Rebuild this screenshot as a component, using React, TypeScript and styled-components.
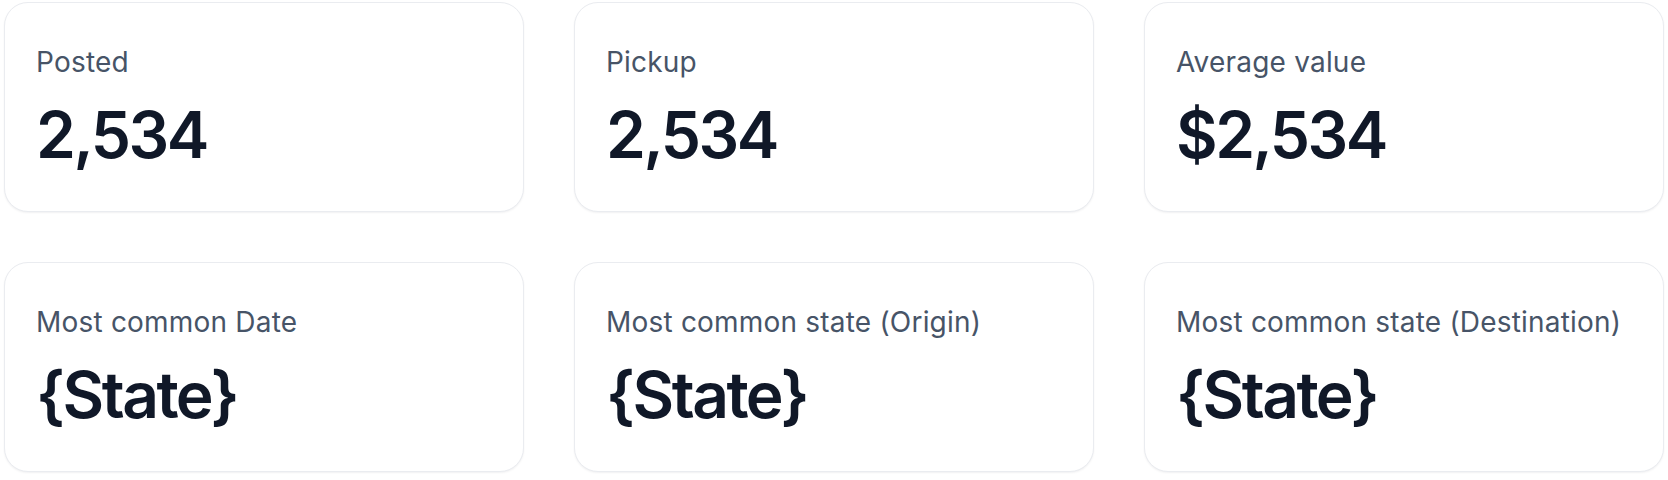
import styled, { createGlobalStyle } from 'styled-components';

const GlobalStyle = createGlobalStyle`
	* {
		box-sizing: border-box;
	}
	body {
		margin: 0;
		background: #ffffff;
		font-family: Inter, 'Noto Sans', sans-serif;
	}
`;

type Stat = { label: string; value: string };

const stats: Stat[] = [
	{ label: 'Posted', value: '2,534' },
	{ label: 'Pickup', value: '2,534' },
	{ label: 'Average value', value: '$2,534' },
	{ label: 'Most common Date', value: '{State}' },
	{ label: 'Most common state (Origin)', value: '{State}' },
	{ label: 'Most common state (Destination)', value: '{State}' },
];

const StatCard = (props: { item: Stat }) => {
	const { label, value } = props.item;
	return (
		<Card>
			<Label>{label}</Label>
			<Value>{value}</Value>
		</Card>
	);
};

const App = () => {
	return (
		<>
			<GlobalStyle />
			<Grid>
				{stats.map((item) => (
					<StatCard key={item.label} item={item} />
				))}
			</Grid>
		</>
	);
};

export default App;

const Grid = styled.div`
	display: grid;
	grid-template-columns: repeat(3, 520px);
	column-gap: 50px;
	row-gap: 50px;
	padding: 2px 4px;
`;

const Card = styled.div`
	display: flex;
	flex-direction: column;
	gap: 17px;
	height: 210px;
	padding: 39px 31px;
	background: #ffffff;
	border: 1px solid #eaecf0;
	border-radius: 24px;
	box-shadow: 0 1px 2px rgba(16, 24, 40, 0.06);
`;

const Label = styled.div`
	font-size: 28px;
	line-height: 40px;
	font-weight: 400;
	color: #475467;
	letter-spacing: 0.2px;
	white-space: nowrap;
`;

const Value = styled.div`
	font-size: 64px;
	line-height: 72px;
	font-weight: 600;
	color: #101828;
	letter-spacing: -2.5px;
`;
